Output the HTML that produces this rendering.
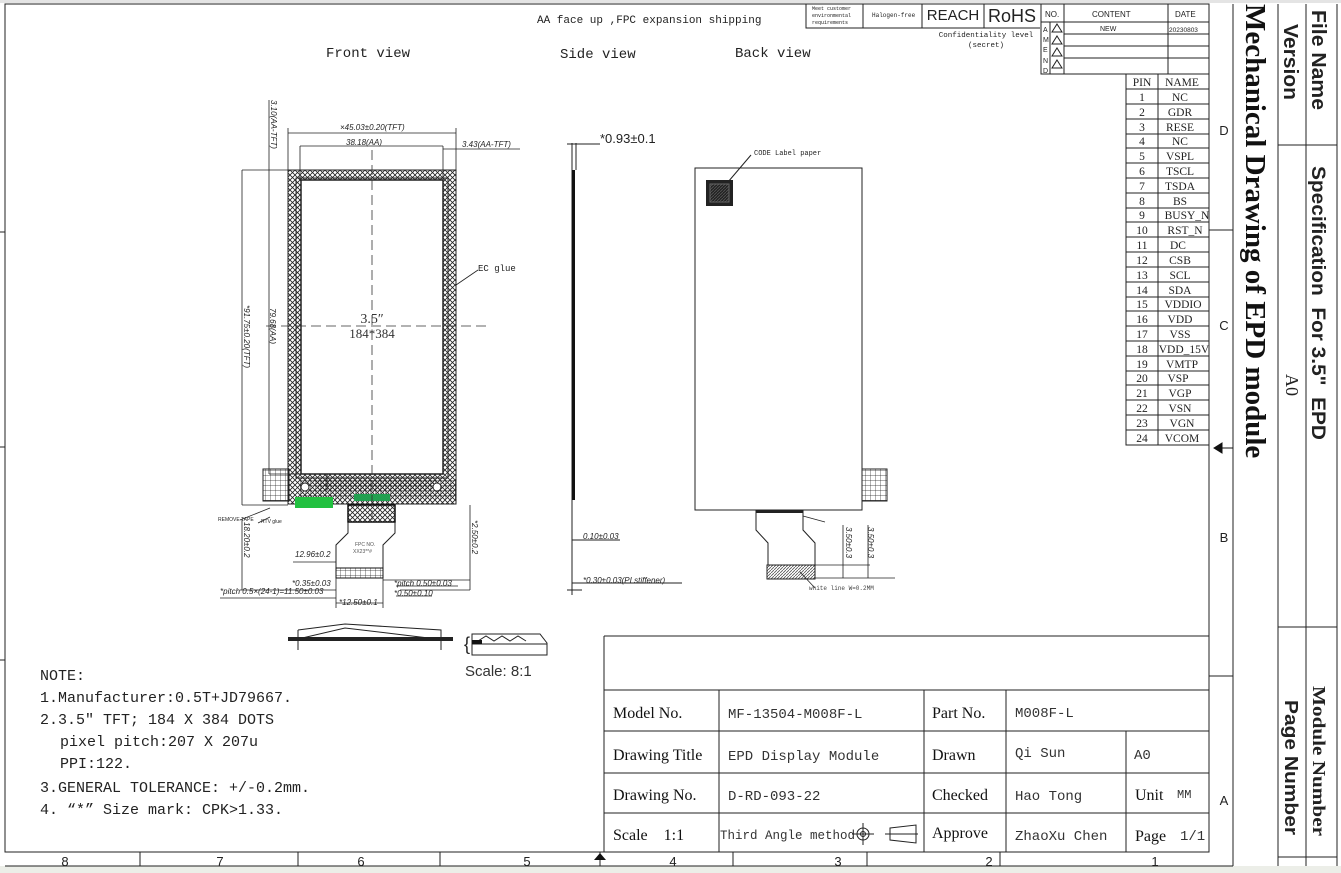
<!DOCTYPE html>
<html><head><meta charset="utf-8"><style>
html,body{margin:0;padding:0;background:#fff}
svg{display:block}
.m{font-family:"Liberation Mono",monospace}
.s{font-family:"Liberation Serif",serif}
.a{font-family:"Liberation Sans",sans-serif}
.d{font-family:"Liberation Sans",sans-serif;font-style:italic;font-size:8px}
</style></head><body>
<svg width="1341" height="873" viewBox="0 0 1341 873" xmlns="http://www.w3.org/2000/svg">
<defs>
<pattern id="x" width="5" height="5" patternUnits="userSpaceOnUse"><path d="M0 0L5 5M5 0L0 5" stroke="#222" stroke-width="0.8"/></pattern>
<pattern id="g" width="5" height="5" patternUnits="userSpaceOnUse"><path d="M0 0H5M0 0V5" stroke="#222" stroke-width="0.7" fill="none"/></pattern>
<pattern id="h" width="3" height="3" patternUnits="userSpaceOnUse"><path d="M0 3L3 0" stroke="#555" stroke-width="0.8"/></pattern>
</defs>
<rect x="0" y="0" width="1341" height="3" fill="#e4e4e4"/>
<rect x="0" y="866" width="1341" height="7" fill="#eceee8"/>
<g stroke="#222" fill="none" stroke-width="1">
<path d="M5 4H1209V852H5Z"/>
<path d="M1233 4V866M1278 4V866M1306 4V866M1337 4V866"/>
<path d="M1278 145H1337M1278 627H1337M1278 857H1337"/>
<path d="M5 866H1233M140 852V866M298 852V866M440 852V866M600 852V866M733 852V866M867 852V866M1000 852V866"/>
<path d="M0 232H5M0 447H5M0 660H5M1209 230H1233M1209 676H1233"/>
<path d="M806 4V28H1040M863 4V28M922 4V28M984 4V28"/>
<path d="M1041 4V74H1209M1041 22H1209M1064 34H1209M1064 46H1209M1064 58H1209M1050 22V74M1064 4V74M1168 4V74"/>
<path d="M1126 74V445H1209M1158 74V445"/>
</g>
<path d="M1214 448L1222 443V453Z M1222 448H1233" fill="#111" stroke="#111"/>
<g class="a" font-size="13" fill="#222" text-anchor="middle">
<text x="1224" y="135">D</text><text x="1224" y="330">C</text><text x="1224" y="542">B</text><text x="1224" y="805">A</text>
<text x="65" y="866">8</text><text x="220" y="866">7</text><text x="361" y="866">6</text><text x="527" y="866">5</text><text x="673" y="866">4</text><text x="838" y="866">3</text><text x="989" y="866">2</text><text x="1155" y="866">1</text>
</g>
<path d="M600 853L594 860H606Z" fill="#111"/>
<g class="m" font-size="5" fill="#222"><text x="812" y="10">Meet customer</text><text x="812" y="17">environmental</text><text x="812" y="24">requirements</text></g>
<text x="872" y="17" class="m" font-size="6" fill="#222">Halogen-free</text>
<text x="953" y="20" class="a" font-size="15" text-anchor="middle" fill="#222">REACH</text>
<text x="1012" y="22" class="a" font-size="18" text-anchor="middle" fill="#222">RoHS</text>
<text x="986" y="37" class="m" font-size="7.5" text-anchor="middle" fill="#222">Confidentiality level</text>
<text x="986" y="47" class="m" font-size="7.5" text-anchor="middle" fill="#222">(secret)</text>
<g class="a" font-size="8" fill="#222"><text x="1045" y="17">NO.</text><text x="1092" y="17">CONTENT</text><text x="1175" y="17">DATE</text>
<text x="1100" y="31" font-size="7">NEW</text><text x="1169" y="32" font-size="6.5">20230803</text>
<text x="1043" y="32" font-size="7">A</text><text x="1043" y="42" font-size="7">M</text><text x="1043" y="52" font-size="7">E</text><text x="1043" y="63" font-size="7">N</text><text x="1043" y="73" font-size="7">D</text></g>
<g fill="none" stroke="#222"><path d="M1057 24L1062 32H1052Z M1057 36L1062 44H1052Z M1057 48L1062 56H1052Z M1057 60L1062 68H1052Z"/></g>
<g class="s" font-size="11.5" fill="#222" text-anchor="middle">
<text x="1142" y="86">PIN</text><text x="1182" y="86">NAME</text>
</g>
<g stroke="#222" stroke-width="1">
<path d="M1126 89H1209M1126 104H1209M1126 119H1209M1126 134H1209M1126 148H1209M1126 163H1209M1126 178H1209M1126 193H1209M1126 208H1209M1126 222H1209M1126 237H1209M1126 252H1209M1126 267H1209M1126 282H1209M1126 297H1209M1126 311H1209M1126 326H1209M1126 341H1209M1126 356H1209M1126 371H1209M1126 385H1209M1126 400H1209M1126 415H1209M1126 430H1209"/>
</g>
<g class="s" font-size="11.5" fill="#222" text-anchor="middle">
<text x="1142" y="101">1</text><text x="1180" y="101">NC</text>
<text x="1142" y="116">2</text><text x="1180" y="116">GDR</text>
<text x="1142" y="131">3</text><text x="1180" y="131">RESE</text>
<text x="1142" y="145">4</text><text x="1180" y="145">NC</text>
<text x="1142" y="160">5</text><text x="1180" y="160">VSPL</text>
<text x="1142" y="175">6</text><text x="1180" y="175">TSCL</text>
<text x="1142" y="190">7</text><text x="1180" y="190">TSDA</text>
<text x="1142" y="205">8</text><text x="1180" y="205">BS</text>
<text x="1142" y="219">9</text><text x="1187" y="219">BUSY_N</text>
<text x="1142" y="234">10</text><text x="1185" y="234">RST_N</text>
<text x="1142" y="249">11</text><text x="1178" y="249">DC</text>
<text x="1142" y="264">12</text><text x="1180" y="264">CSB</text>
<text x="1142" y="279">13</text><text x="1180" y="279">SCL</text>
<text x="1142" y="294">14</text><text x="1180" y="294">SDA</text>
<text x="1142" y="308">15</text><text x="1183" y="308">VDDIO</text>
<text x="1142" y="323">16</text><text x="1180" y="323">VDD</text>
<text x="1142" y="338">17</text><text x="1180" y="338">VSS</text>
<text x="1142" y="353">18</text><text x="1184" y="353">VDD_15V</text>
<text x="1142" y="368">19</text><text x="1182" y="368">VMTP</text>
<text x="1142" y="382">20</text><text x="1178" y="382">VSP</text>
<text x="1142" y="397">21</text><text x="1180" y="397">VGP</text>
<text x="1142" y="412">22</text><text x="1180" y="412">VSN</text>
<text x="1142" y="427">23</text><text x="1182" y="427">VGN</text>
<text x="1142" y="442">24</text><text x="1182" y="442">VCOM</text>
</g>
<text transform="translate(1246 4) rotate(90)" class="s" font-weight="bold" font-size="29" fill="#111">Mechanical Drawing of EPD module</text>
<text transform="translate(1312 10) rotate(90)" class="a" font-weight="bold" font-size="20" fill="#222" textLength="100" lengthAdjust="spacingAndGlyphs">File Name</text>
<text transform="translate(1284 24) rotate(90)" class="a" font-weight="bold" font-size="20" fill="#222" textLength="76" lengthAdjust="spacingAndGlyphs">Version</text>
<text transform="translate(1312 166) rotate(90)" class="a" font-weight="bold" font-size="19" fill="#222" textLength="274" lengthAdjust="spacingAndGlyphs" xml:space="preserve">Specification  For 3.5"  EPD</text>
<text transform="translate(1286 374) rotate(90)" class="s" font-size="18" fill="#222">A0</text>
<text transform="translate(1313 686) rotate(90)" class="s" font-weight="bold" font-size="18" fill="#222" textLength="150" lengthAdjust="spacingAndGlyphs">Module Number</text>
<text transform="translate(1285 700) rotate(90)" class="a" font-weight="bold" font-size="18" fill="#222" textLength="135" lengthAdjust="spacingAndGlyphs">Page Number</text>
<g stroke="#222" fill="none"><path d="M604 636H1209M604 636V852M604 690H1209M604 731H1209M604 773H1209M604 813H1209M719 690V852M924 690V852M1006 690V852M1126 731V852"/></g>
<g class="s" font-size="16" fill="#111">
<text x="613" y="718">Model No.</text><text x="613" y="760">Drawing Title</text><text x="613" y="800">Drawing No.</text><text x="613" y="840" xml:space="preserve">Scale    1:1</text>
<text x="932" y="718">Part No.</text><text x="932" y="760">Drawn</text><text x="932" y="800">Checked</text><text x="932" y="838">Approve</text>
<text x="1135" y="800">Unit</text><text x="1135" y="841">Page</text>
</g>
<g class="m" font-size="14" fill="#333">
<text x="728" y="718">MF-13504-M008F-L</text><text x="728" y="760">EPD Display Module</text><text x="728" y="800">D-RD-093-22</text>
<text x="720" y="839" font-size="12.5">Third Angle method</text>
<text x="1015" y="717">M008F-L</text><text x="1015" y="757">Qi Sun</text><text x="1015" y="800">Hao Tong</text><text x="1015" y="840">ZhaoXu Chen</text>
<text x="1134" y="759">A0</text><text x="1177" y="798" font-size="12">MM</text><text x="1180" y="840">1/1</text>
</g>
<g stroke="#222" fill="none"><circle cx="863" cy="834" r="6"/><circle cx="863" cy="834" r="2.5"/><path d="M852 834H874M863 823V845M885 834H918M890 828L916 825V843L890 840Z"/></g>
<g class="m" font-size="15" fill="#222">
<text x="40" y="680">NOTE:</text>
<text x="40" y="702">1.Manufacturer:0.5T+JD79667.</text>
<text x="40" y="724">2.3.5″ TFT; 184 X 384 DOTS</text>
<text x="60" y="746">pixel pitch:207 X 207u</text>
<text x="60" y="768">PPI:122.</text>
<text x="40" y="792">3.GENERAL TOLERANCE: +/-0.2mm.</text>
<text x="40" y="814">4. “*” Size mark: CPK&gt;1.33.</text>
</g>
<g class="m" fill="#222"><text x="537" y="23" font-size="11">AA face up ,FPC expansion shipping</text>
<text x="326" y="57" font-size="14">Front view</text><text x="560" y="58" font-size="14">Side view</text><text x="735" y="57" font-size="14">Back view</text></g>
<rect x="288" y="170" width="168" height="334" fill="url(#x)" stroke="#222"/>
<rect x="296" y="178" width="152" height="300" fill="none" stroke="#222"/>
<rect x="301" y="180" width="142" height="294" fill="#fff" stroke="#222" stroke-width="1.5"/>
<rect x="300" y="480" width="156" height="20" fill="url(#g)"/>
<path d="M314 480H436L440 490H318Z" fill="url(#x)"/>
<circle cx="305" cy="487" r="4" fill="#fff" stroke="#222"/><circle cx="437" cy="487" r="4" fill="#fff" stroke="#222"/>
<rect x="295" y="497" width="38" height="11" fill="#22c040"/><rect x="354" y="494" width="36" height="7" fill="#22a050"/>
<rect x="263" y="469" width="26" height="32" fill="url(#g)" stroke="#222"/>
<path d="M300 474H327V490" stroke="#222" fill="none"/>
<rect x="348" y="505" width="47" height="17" fill="url(#x)" stroke="#111" stroke-width="1.5"/>
<path d="M348 522V533L336 545V568H383V545L395 533V522" stroke="#222" fill="none"/>
<rect x="336" y="568" width="47" height="10" fill="url(#g)" stroke="#111"/>
<text x="355" y="546" class="a" font-size="5" fill="#555">FPC  NO.</text><text x="353" y="553" class="a" font-size="5" fill="#555">XX23**#</text>
<g stroke="#333" fill="none" stroke-width="0.8" stroke-dasharray="10 5"><path d="M372 150V520M266 326H486"/></g>
<text x="372" y="323" class="s" font-size="14" text-anchor="middle" fill="#333">3.5″</text>
<text x="372" y="338" class="s" font-size="13" text-anchor="middle" fill="#333">184*384</text>
<g stroke="#222" fill="none" stroke-width="0.8">
<path d="M288 128V170M456 128V170M288 133H456M300 146H443M300 146V180M443 146V180M443 149H520"/>
<path d="M269 100V180M242 170H290M242 170V505M242 505H288M269 180V474M269 474H300"/>
<path d="M242 520V590M240 590H336M293 562H336M470 505V590M400 590H470M383 580H470"/>
<path d="M336 578V608M383 578V608M336 603H383M220 598H336M396 586H458M396 596H432"/>
<path d="M456 285L478 270"/><path d="M240 520L270 508M258 523L270 517"/>
</g>
<g class="d" fill="#222">
<text x="340" y="130">×45.03±0.20(TFT)</text><text x="346" y="145">38.18(AA)</text><text x="462" y="147">3.43(AA-TFT)</text>
<text x="295" y="557">12.96±0.2</text><text x="292" y="586">*0.35±0.03</text><text x="220" y="594">*pitch 0.5×(24-1)=11.50±0.03</text>
<text x="394" y="586">*pitch 0.50±0.03</text><text x="394" y="596">*0.50±0.10</text><text x="339" y="605">*12.50±0.1</text>
<text x="218" y="521" font-size="5" font-style="normal">REMOVE TAPE</text><text x="261" y="523" font-size="5" font-style="normal">RTV glue</text>
</g>
<text x="478" y="271" class="m" font-size="9" fill="#222">EC glue</text>
<g class="d" fill="#222">
<text transform="translate(271 100) rotate(90)">3.10(AA-TFT)</text>
<text transform="translate(244 305) rotate(90)">*91.75±0.20(TFT)</text>
<text transform="translate(270 308) rotate(90)">79.68(AA)</text>
<text transform="translate(244 522) rotate(90)">18.20±0.2</text>
<text transform="translate(472 520) rotate(90)">*2.50±0.2</text>
</g>
<g stroke="#222" fill="none"><path d="M572 143V595M576 143V170M567 144H600"/><path d="M572 540H620M572 583H682M567 590H582"/></g>
<rect x="572" y="170" width="3" height="330" fill="#111"/>
<text x="600" y="143" class="a" font-size="13" fill="#222">*0.93±0.1</text>
<text x="583" y="539" class="d" fill="#222">0.10±0.03</text><text x="583" y="583" class="d" fill="#222">*0.30±0.03(PI stiffener)</text>
<rect x="695" y="168" width="167" height="342" fill="#fff" stroke="#222"/>
<rect x="706" y="180" width="27" height="26" fill="#222"/><rect x="710" y="184" width="19" height="18" fill="url(#h)" stroke="#666"/>
<path d="M728 182L751 155" stroke="#222"/>
<text x="754" y="155" class="m" font-size="7" fill="#222">CODE  Label paper</text>
<rect x="862" y="469" width="25" height="32" fill="url(#g)" stroke="#222"/>
<path d="M756 510V530L768 543V565H815V543L803 530V510" stroke="#222" fill="none"/>
<rect x="767" y="565" width="48" height="14" fill="url(#h)" stroke="#222"/>
<rect x="756" y="510" width="47" height="3" fill="#222"/>
<g stroke="#222" fill="none" stroke-width="0.8"><path d="M815 565H870M815 578H895M843 525V578M868 525V578M803 516L825 522M800 572L815 588"/></g>
<g class="d" fill="#222"><text transform="translate(846 527) rotate(90)">3.50±0.3</text><text transform="translate(868 527) rotate(90)">3.50±0.3</text></g>
<text x="809" y="590" class="m" font-size="6" fill="#444">white line W=0.2MM</text>
<g stroke="#222" fill="none"><path d="M298 630L345 624L441 630V650M298 630V650M298 639L345 628L437 639"/></g>
<rect x="288" y="637" width="165" height="4" fill="#222"/>
<path d="M472 634H540L547 643V655H472Z M472 644H547M478 641L486 636L494 641L502 636L510 641L518 636L526 641" stroke="#222" fill="none"/>
<rect x="472" y="640" width="10" height="4" fill="#111"/>
<text x="464" y="650" class="a" font-size="18" fill="#222">{</text>
<text x="465" y="676" class="a" font-size="15" fill="#333">Scale: 8:1</text>
</svg>
</body></html>
